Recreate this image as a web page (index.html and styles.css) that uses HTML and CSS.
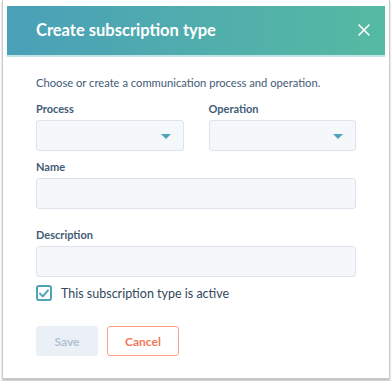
FILE: index.html
```html
<!DOCTYPE html>
<html lang="en">
<head>
    <meta charset="UTF-8">
    <title>Create subscription type</title>
    <link rel="stylesheet" href="styles.css">
</head>
<body>
    <div class="window">
        <div class="modal">
            <div class="modal-header">
                <h1>Create subscription type</h1>
                <button class="close-button" aria-label="Close">
                    <svg width="12" height="12" viewBox="0 0 12 12">
                        <path d="M1 1L11 11M11 1L1 11" stroke="#fff" stroke-width="1.6" stroke-linecap="round"/>
                    </svg>
                </button>
            </div>

            <div class="modal-body">
                <p class="intro">Choose or create a communication process and operation.</p>

                <div class="row">
                    <div class="field">
                        <label>Process</label>
                        <div class="select"><span class="caret"></span></div>
                    </div>
                    <div class="field">
                        <label>Operation</label>
                        <div class="select"><span class="caret"></span></div>
                    </div>
                </div>

                <div class="field">
                    <label>Name</label>
                    <div class="input"></div>
                </div>

                <div class="field field-desc">
                    <label>Description</label>
                    <div class="input"></div>
                </div>

                <label class="checkbox">
                    <span class="box">
                        <svg width="10" height="9" viewBox="0 0 10 9">
                            <path d="M1 4.6L3.8 7.4L9 1.4" fill="none" stroke="#4fa3b9" stroke-width="2" stroke-linecap="round" stroke-linejoin="round"/>
                        </svg>
                    </span>
                    This subscription type is active
                </label>

                <div class="button-group">
                    <button class="btn btn-save">Save</button>
                    <button class="btn btn-cancel">Cancel</button>
                </div>
            </div>
        </div>
    </div>
</body>
</html>
```

FILE: styles.css
```css
* {
    margin: 0;
    padding: 0;
    box-sizing: border-box;
    font-family: 'Lato', 'Noto Sans', sans-serif;
}

body {
    background: #fff;
    width: 392px;
    height: 381px;
    overflow: hidden;
}

.window {
    margin: 0 2px;
    height: 379px;
    border: 1px solid #c9c9c9;
    border-top: none;
    box-shadow: 0 2px 2px rgba(0, 0, 0, 0.25);
    padding: 6px 4px 0;
}

.modal-header {
    height: 51px;
    background: linear-gradient(to right, #4aa0b8, #55baa2);
    border-bottom: 2px solid #c3e4e6;
    display: flex;
    align-items: center;
    justify-content: space-between;
    padding: 0 15px 0 29px;
}

.modal-header h1 {
    color: #fff;
    font-size: 16.5px;
    font-weight: 700;
    margin-top: -2px;
}

.close-button {
    background: none;
    border: none;
    width: 12px;
    height: 12px;
    display: flex;
    margin-top: -2px;
}

.modal-body {
    padding: 18px 29px 0;
    color: #33475b;
}

.intro {
    font-size: 11.2px;
    line-height: 16px;
    color: #425b76;
    margin-bottom: 10px;
}

.row {
    display: flex;
    gap: 25px;
    margin-bottom: 8px;
}

.row .field {
    flex: 1;
}

.field label {
    display: block;
    font-size: 11px;
    font-weight: 700;
    color: #425b76;
    line-height: 16px;
    margin-bottom: 3px;
}

.select,
.input {
    height: 31px;
    background: #f5f8fa;
    border: 1px solid #dfe3eb;
    border-radius: 3px;
    position: relative;
}

.caret {
    position: absolute;
    right: 12px;
    top: 13px;
    width: 0;
    height: 0;
    border-left: 5px solid transparent;
    border-right: 5px solid transparent;
    border-top: 5px solid #4fa3b9;
}

.field-desc {
    margin-top: 18px;
}

.checkbox {
    display: flex;
    align-items: center;
    gap: 9px;
    margin-top: 8px;
    font-size: 12.5px;
    color: #33475b;
}

.box {
    width: 16px;
    height: 16px;
    border: 2px solid #4fa3b9;
    border-radius: 3px;
    display: flex;
    align-items: center;
    justify-content: center;
}

.button-group {
    display: flex;
    gap: 9px;
    margin-top: 25px;
}

.btn {
    height: 30px;
    border-radius: 3px;
    font-size: 12px;
    font-weight: 700;
    background: #fff;
}

.btn-save {
    width: 62px;
    background: #eaf0f6;
    border: 1px solid #eaf0f6;
    color: #b0c1d4;
}

.btn-cancel {
    width: 72px;
    border: 1px solid #ff9f85;
    color: #f2795a;
}
```
